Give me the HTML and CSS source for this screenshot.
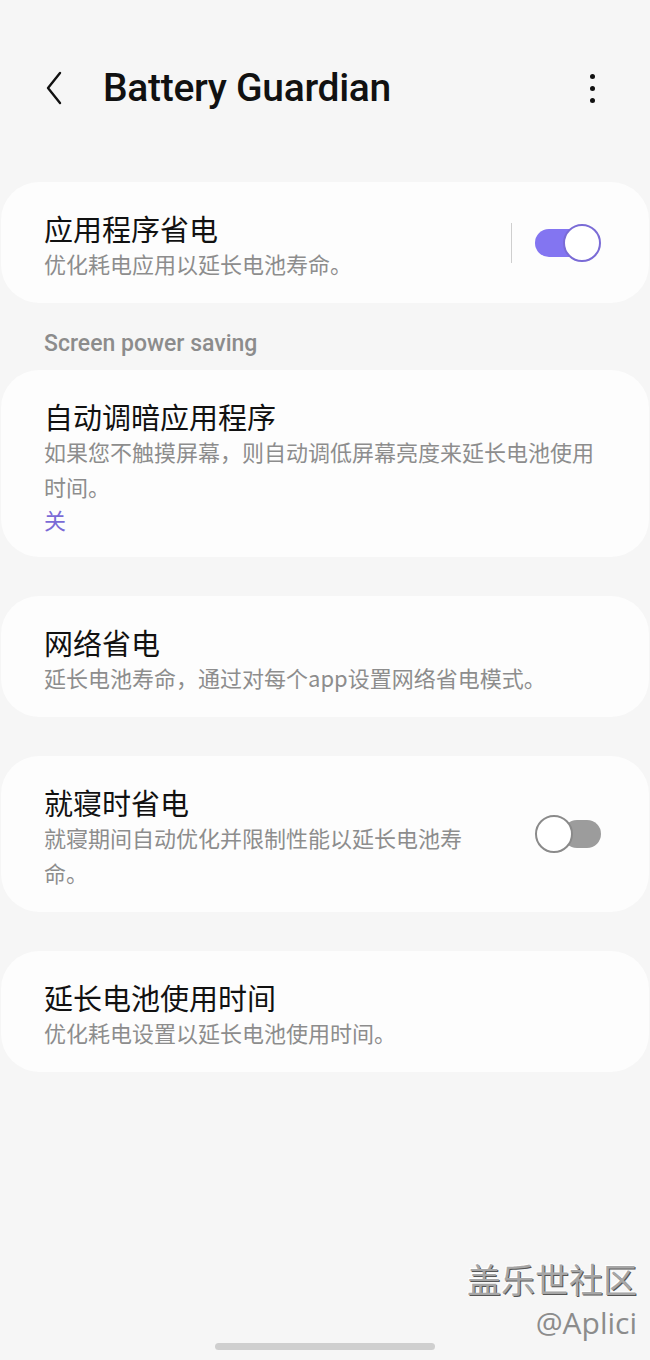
FILE: index.html
```html
<!DOCTYPE html>
<html lang="zh-CN">
<head>
    <meta charset="UTF-8">
    <meta name="viewport" content="width=device-width, initial-scale=1.0">
    <title>Battery Guardian</title>
    <link rel="stylesheet" href="styles.css">
</head>
<body>
    <div class="screen">
        <div class="header">
            <svg class="back" width="24" height="36" viewBox="0 0 24 36">
                <path d="M18 3 L6 18 L18 33" fill="none" stroke="#111" stroke-width="2.4" stroke-linecap="round" stroke-linejoin="round"/>
            </svg>
            <h1>Battery Guardian</h1>
            <div class="more">
                <span></span><span></span><span></span>
            </div>
        </div>

        <div class="list">
            <div class="card">
                <div class="text">
                    <div class="title">应用程序省电</div>
                    <div class="sub">优化耗电应用以延长电池寿命。</div>
                </div>
                <div class="divider"></div>
                <div class="switch on"><i></i></div>
            </div>

            <div class="section">Screen power saving</div>

            <div class="card">
                <div class="text wide">
                    <div class="title">自动调暗应用程序</div>
                    <div class="sub">如果您不触摸屏幕，则自动调低屏幕亮度来延长电池使用时间。</div>
                    <div class="state">关</div>
                </div>
            </div>

            <div class="card">
                <div class="text wide">
                    <div class="title">网络省电</div>
                    <div class="sub">延长电池寿命，通过对每个app设置网络省电模式。</div>
                </div>
            </div>

            <div class="card">
                <div class="text">
                    <div class="title">就寝时省电</div>
                    <div class="sub">就寝期间自动优化并限制性能以延长电池寿命。</div>
                </div>
                <div class="switch off"><i></i></div>
            </div>

            <div class="card">
                <div class="text wide">
                    <div class="title">延长电池使用时间</div>
                    <div class="sub">优化耗电设置以延长电池使用时间。</div>
                </div>
            </div>
        </div>

        <div class="watermark">
            <div class="wm-cn">盖乐世社区</div>
            <div class="wm-id">@Aplici</div>
        </div>
        <div class="homebar"></div>
    </div>
</body>
</html>
```

FILE: styles.css
```css
body {
    margin: 0;
    padding: 0;
    background-color: #f6f6f6;
    color: #111;
    font-family: "Noto Sans CJK SC", "Noto Sans", sans-serif;
}
.screen {
    position: relative;
    width: 650px;
    height: 1360px;
    overflow: hidden;
}
.header {
    height: 176px;
    display: flex;
    align-items: center;
    padding: 0 0 0 42px;
}
.back {
    display: block;
}
h1 {
    margin: 0 0 0 37px;
    font-family: Roboto, "Liberation Sans", sans-serif;
    font-weight: 500;
    font-size: 39px;
    letter-spacing: -0.3px;
    color: #111;
    flex: 1;
}
.more {
    display: flex;
    flex-direction: column;
    gap: 7px;
    margin-right: 55px;
}
.more span {
    width: 5px;
    height: 5px;
    border-radius: 50%;
    background: #111;
}
.list {
    padding-top: 6px;
}
.card {
    display: flex;
    align-items: center;
    margin: 0 1px 39px;
    padding: 0 48px 0 43px;
    background: #fdfdfd;
    border-radius: 38px;
}
.text {
    flex: 1;
    padding: 28px 56px 22px 0;
}
.text.wide {
    padding-right: 0;
}
.title {
    font-size: 29px;
    line-height: 36px;
    color: #111;
}
.sub {
    font-size: 22px;
    line-height: 35px;
    color: #8d8d8d;
}
.state {
    font-size: 22px;
    line-height: 31px;
    color: #7a6ad6;
}
.section {
    padding: 28px 0 13px 44px;
    margin-top: -39px;
    font-family: Roboto, "Liberation Sans", sans-serif;
    font-weight: 500;
    font-size: 23px;
    line-height: 26px;
    color: #8c8c8c;
}
.divider {
    width: 1px;
    height: 40px;
    background: #cfcfcf;
    margin-right: 23px;
}
.switch {
    position: relative;
    width: 66px;
    height: 38px;
}
.switch::before {
    content: "";
    position: absolute;
    top: 5px;
    height: 28px;
    border-radius: 14px;
}
.switch i {
    position: absolute;
    top: 0;
    width: 34px;
    height: 34px;
    border-radius: 50%;
    background: #fff;
}
.switch.on::before {
    left: 0;
    right: 10px;
    background: #8375f1;
}
.switch.on i {
    right: 0;
    border: 2px solid #7a6bd6;
}
.switch.off::before {
    left: 28px;
    right: 0;
    background: #9c9c9c;
}
.switch.off i {
    left: 0;
    border: 2px solid #8a8a8a;
}
.watermark {
    position: absolute;
    right: 13px;
    top: 1260px;
    text-align: right;
    color: #a6a6a6;
}
.wm-cn {
    font-size: 34px;
    line-height: 38px;
    text-shadow: 1px 1px 0 #555, -1px -1px 0 #fff;
}
.wm-id {
    margin-top: 8px;
    font-family: "Open Sans", "Liberation Sans", sans-serif;
    font-size: 30px;
    line-height: 34px;
    color: #8c8c8c;
}
.homebar {
    position: absolute;
    left: 215px;
    top: 1343px;
    width: 220px;
    height: 7px;
    border-radius: 4px;
    background: #cfcfcf;
}
```
